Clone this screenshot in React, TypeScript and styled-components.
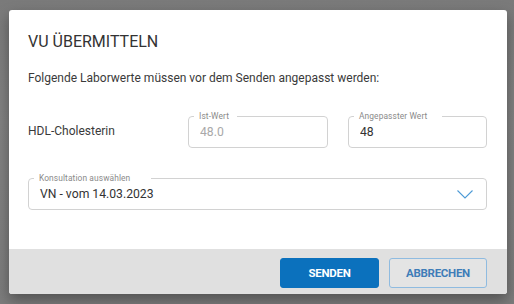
import React from "react";
import styled, { createGlobalStyle } from "styled-components";

const GlobalStyle = createGlobalStyle`
  html, body {
    margin: 0;
    padding: 0;
    background: #7e7e7e;
    font-family: Roboto, "Liberation Sans", Arial, sans-serif;
    color: #333333;
  }
  * { box-sizing: border-box; }
`;

const Backdrop = styled.div`
  width: 514px;
  height: 304px;
  padding: 10px 7px 0 9px;
  background: linear-gradient(180deg, #7a7a7a 0%, #828282 40%, #7c7c7c 100%);
`;

const Dialog = styled.div`
  width: 498px;
  height: 284px;
  display: flex;
  flex-direction: column;
  background: #ffffff;
  border-radius: 3px;
  overflow: hidden;
  box-shadow: 0 6px 14px rgba(0, 0, 0, 0.35);
`;

const Body = styled.div`
  flex: 1;
  padding: 22px 20px 0 19px;
`;

const Title = styled.h2`
  margin: 0;
  font-size: 16px;
  line-height: 19px;
  font-weight: 400;
  color: #333333;
`;

const Description = styled.p`
  margin: 20px 0 0;
  font-size: 12px;
  line-height: 14px;
  color: #3a3a3a;
`;

const FieldRow = styled.div`
  margin-top: 27px;
  display: grid;
  grid-template-columns: 140px 140px 1fr;
  column-gap: 20px;
  align-items: start;
`;

const RowLabel = styled.div`
  font-size: 12px;
  line-height: 14px;
  padding-top: 12px;
  color: #3a3a3a;
`;

const Outline = styled.fieldset<{ $mt?: number }>`
  margin: ${(p) => p.$mt ?? 0}px 0 0;
  padding: 0 13px 4px 11px;
  border: 1px solid #d2d2d2;
  border-radius: 4px;
  min-width: 0;
`;

const Legend = styled.legend<{ $gap: number }>`
  margin-left: -6px;
  padding: 0 ${(p) => p.$gap}px 0 5px;
  font-size: 8.4px;
  line-height: 8px;
  color: #8a8a8a;
  letter-spacing: 0.1px;
`;

const ValueInput = styled.input<{ $muted?: boolean }>`
  display: block;
  width: 100%;
  height: 23px;
  margin: 0;
  padding: 0;
  border: none;
  outline: none;
  background: transparent;
  font-family: inherit;
  font-size: 12.2px;
  color: ${(p) => (p.$muted ? "#a9a9a9" : "#333333")};
`;

const SelectRow = styled.div`
  display: flex;
  align-items: center;
  justify-content: space-between;
  height: 23px;
`;

const SelectValue = styled.span`
  font-size: 12.2px;
  color: #333333;
`;

const Chevron = styled.svg`
  width: 16px;
  height: 9px;
  display: block;
  margin-top: 1px;
`;

const Footer = styled.div`
  height: 45px;
  background: #e0e0e0;
  display: flex;
  justify-content: flex-end;
  align-items: flex-start;
  gap: 10px;
  padding: 9px 20px 0 0;
`;

const Button = styled.button<{ $primary?: boolean }>`
  height: 30px;
  width: ${(p) => (p.$primary ? 99 : 98)}px;
  border-radius: 3px;
  border: 1px solid ${(p) => (p.$primary ? "#0b71bd" : "#8fbbe0")};
  background: ${(p) => (p.$primary ? "#0b71bd" : "#e4e4e4")};
  color: ${(p) => (p.$primary ? "#ffffff" : "#3f7db8")};
  font-family: inherit;
  font-size: 11.5px;
  font-weight: 700;
  letter-spacing: -0.3px;
  text-transform: uppercase;
  padding: 0;
  cursor: pointer;
`;

export default function App() {
  return (
    <>
      <GlobalStyle />
      <Backdrop>
        <Dialog role="dialog" aria-label="VU übermitteln">
          <Body>
            <Title>VU ÜBERMITTELN</Title>
            <Description>
              Folgende Laborwerte müssen vor dem Senden angepasst werden:
            </Description>
            <FieldRow>
              <RowLabel>HDL-Cholesterin</RowLabel>
              <Outline>
                <Legend $gap={8}>Ist-Wert</Legend>
                <ValueInput $muted readOnly value="48.0" />
              </Outline>
              <Outline>
                <Legend $gap={15}>Angepasster Wert</Legend>
                <ValueInput readOnly value="48" />
              </Outline>
            </FieldRow>
            <Outline $mt={26}>
              <Legend $gap={21}>Konsultation auswählen</Legend>
              <SelectRow>
                <SelectValue>VN - vom 14.03.2023</SelectValue>
                <Chevron viewBox="0 0 16 9">
                  <polyline
                    points="0.5,0.5 8,8 15.5,0.5"
                    fill="none"
                    stroke="#4e9bd6"
                    strokeWidth="1.1"
                  />
                </Chevron>
              </SelectRow>
            </Outline>
          </Body>
          <Footer>
            <Button $primary>Senden</Button>
            <Button>Abbrechen</Button>
          </Footer>
        </Dialog>
      </Backdrop>
    </>
  );
}
